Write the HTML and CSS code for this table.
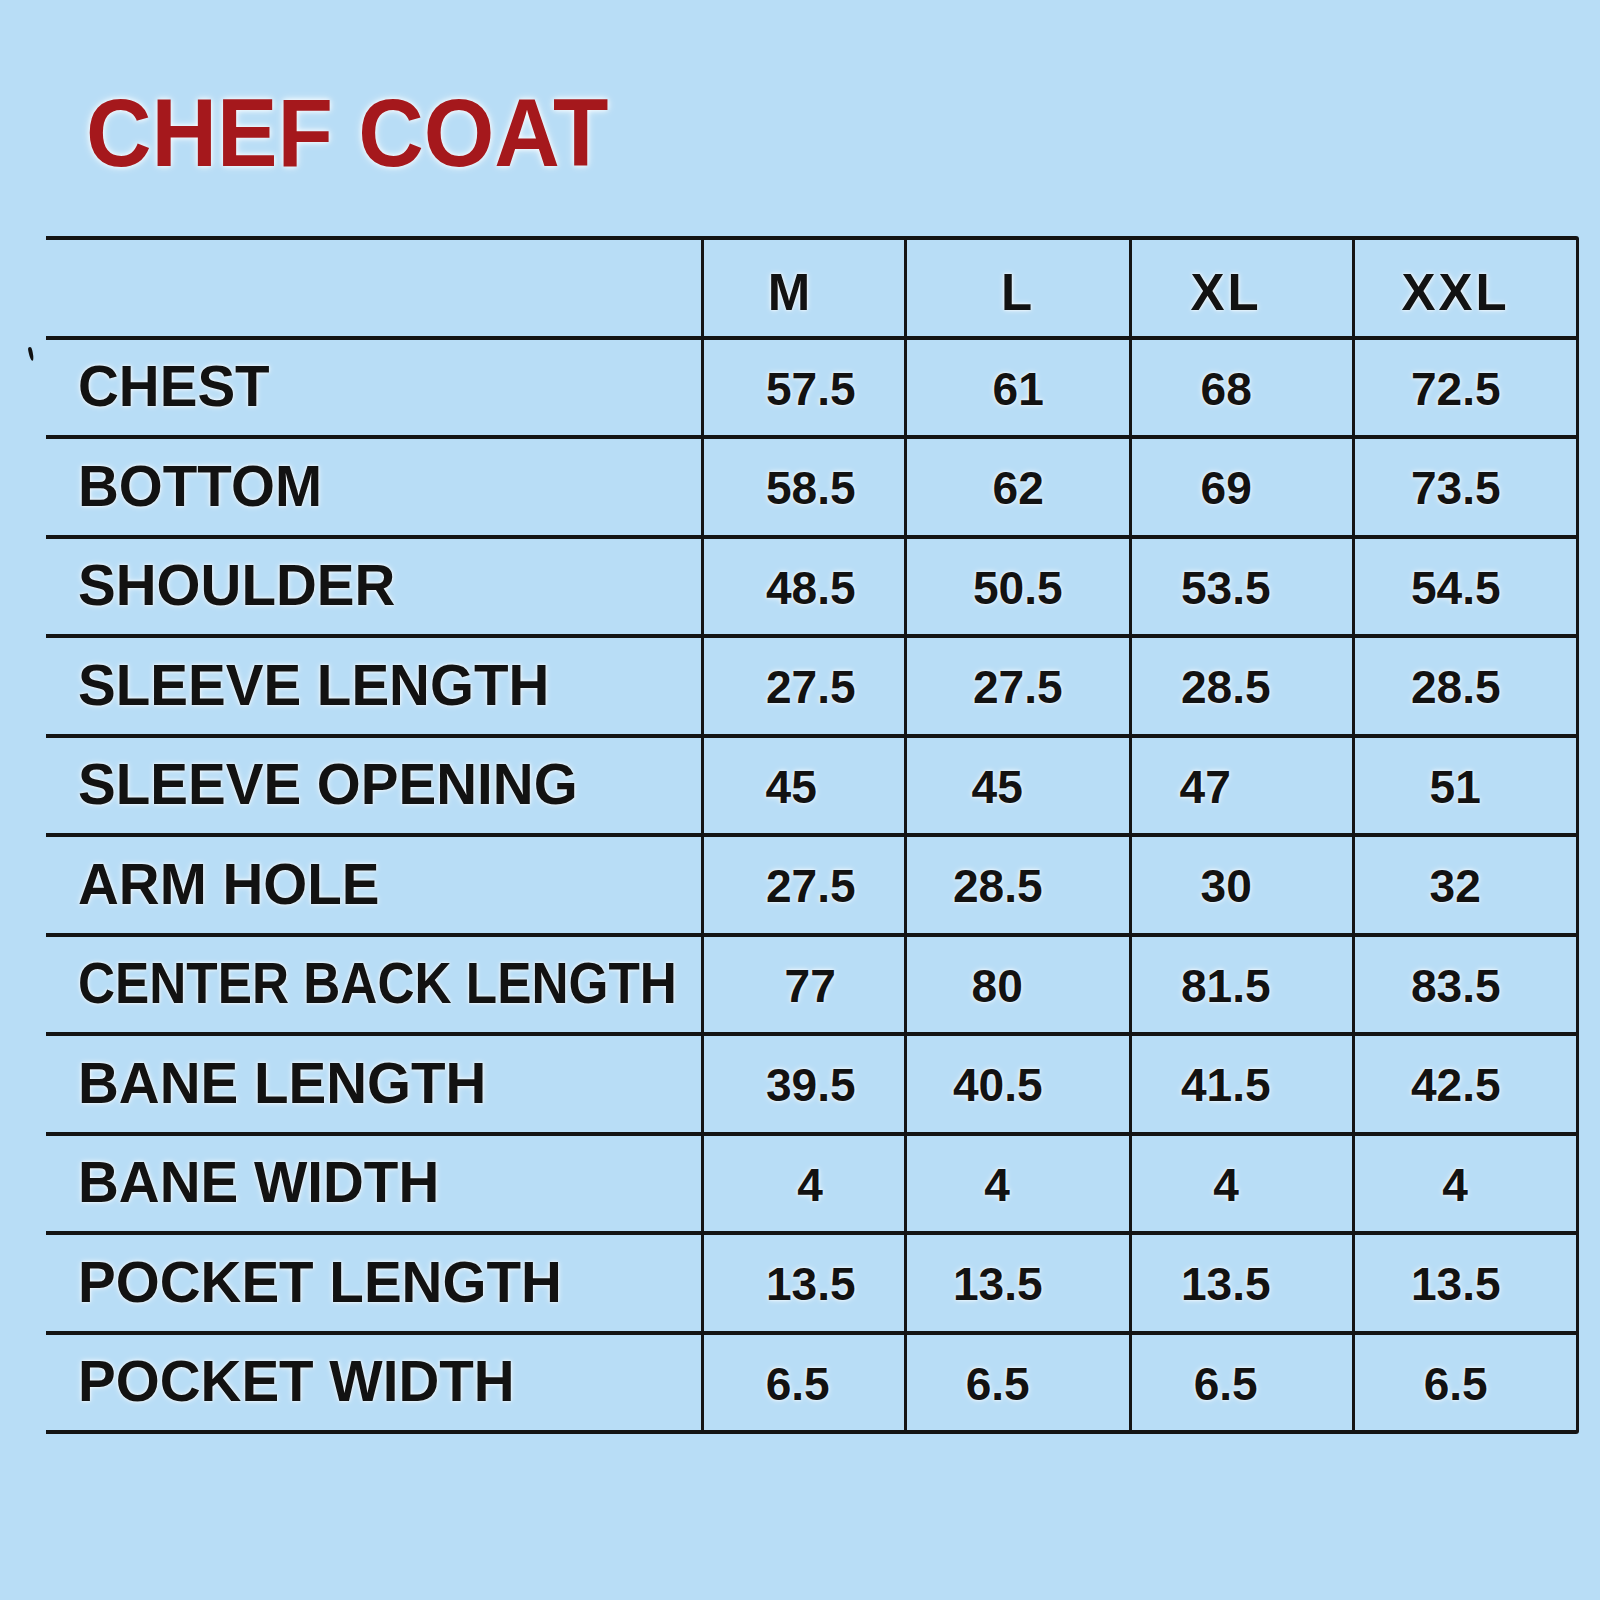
FILE: index.html
```html
<!DOCTYPE html>
<html lang="en">
<head>
<meta charset="utf-8">
<title>Chef Coat Size Chart</title>
<link rel="stylesheet" href="styles.css">
</head>
<body>
<div class="page">
  <span class="speck"></span>
  <h1 class="title"><span class="t">CHEF COAT</span></h1>
  <div class="chart">
    <div class="cell"></div>
    <div class="cell hd hm"><span>M</span></div>
    <div class="cell hd"><span>L</span></div>
    <div class="cell hd xl"><span>XL</span></div>
    <div class="cell hd xxl"><span>XXL</span></div>

    <div class="cell lab"><span>CHEST</span></div>
    <div class="cell num m"><span>57.5</span></div>
    <div class="cell num"><span>61</span></div>
    <div class="cell num xl"><span>68</span></div>
    <div class="cell num xxl"><span>72.5</span></div>

    <div class="cell lab"><span>BOTTOM</span></div>
    <div class="cell num m"><span>58.5</span></div>
    <div class="cell num"><span>62</span></div>
    <div class="cell num xl"><span>69</span></div>
    <div class="cell num xxl"><span>73.5</span></div>

    <div class="cell lab"><span>SHOULDER</span></div>
    <div class="cell num m"><span>48.5</span></div>
    <div class="cell num"><span>50.5</span></div>
    <div class="cell num xl"><span>53.5</span></div>
    <div class="cell num xxl"><span>54.5</span></div>

    <div class="cell lab"><span>SLEEVE LENGTH</span></div>
    <div class="cell num m"><span>27.5</span></div>
    <div class="cell num"><span>27.5</span></div>
    <div class="cell num xl"><span>28.5</span></div>
    <div class="cell num xxl"><span>28.5</span></div>

    <div class="cell lab"><span>SLEEVE OPENING</span></div>
    <div class="cell num m2"><span>45</span></div>
    <div class="cell num l2"><span>45</span></div>
    <div class="cell num xl2"><span>47</span></div>
    <div class="cell num xxl"><span>51</span></div>

    <div class="cell lab"><span>ARM HOLE</span></div>
    <div class="cell num m"><span>27.5</span></div>
    <div class="cell num l2"><span>28.5</span></div>
    <div class="cell num xl"><span>30</span></div>
    <div class="cell num xxl"><span>32</span></div>

    <div class="cell lab long"><span>CENTER BACK LENGTH</span></div>
    <div class="cell num m"><span>77</span></div>
    <div class="cell num l2"><span>80</span></div>
    <div class="cell num xl"><span>81.5</span></div>
    <div class="cell num xxl"><span>83.5</span></div>

    <div class="cell lab"><span>BANE LENGTH</span></div>
    <div class="cell num m"><span>39.5</span></div>
    <div class="cell num l2"><span>40.5</span></div>
    <div class="cell num xl"><span>41.5</span></div>
    <div class="cell num xxl"><span>42.5</span></div>

    <div class="cell lab"><span>BANE WIDTH</span></div>
    <div class="cell num m"><span>4</span></div>
    <div class="cell num l2"><span>4</span></div>
    <div class="cell num xl"><span>4</span></div>
    <div class="cell num xxl"><span>4</span></div>

    <div class="cell lab"><span>POCKET LENGTH</span></div>
    <div class="cell num m"><span>13.5</span></div>
    <div class="cell num l2"><span>13.5</span></div>
    <div class="cell num xl"><span>13.5</span></div>
    <div class="cell num xxl"><span>13.5</span></div>

    <div class="cell lab"><span>POCKET WIDTH</span></div>
    <div class="cell num m3"><span>6.5</span></div>
    <div class="cell num l2"><span>6.5</span></div>
    <div class="cell num xl"><span>6.5</span></div>
    <div class="cell num xxl"><span>6.5</span></div>
  </div>
</div>
</body>
</html>
```

FILE: styles.css
```css
* { box-sizing: border-box; }

html, body {
  margin: 0;
  padding: 0;
  background: #b8ddf6;
}

.page {
  position: relative;
  width: 1600px;
  min-height: 1600px;
  padding-top: 85px;
  font-family: "Liberation Sans", Arial, sans-serif;
  font-weight: bold;
  color: #121212;
}

.speck {
  position: absolute;
  left: 29px;
  top: 347px;
  width: 4px;
  height: 14px;
  background: #111;
  border-radius: 50% 50% 60% 60% / 30% 30% 70% 70%;
  transform: rotate(-12deg);
}

.title {
  margin: 0 0 55px 0;
  padding-left: 86px;
  height: 96px;
  font-size: 96px;
  line-height: 1;
  font-weight: bold;
  color: #a5181c;
  text-shadow: 0 0 5px #fff, 0 0 10px rgba(255, 255, 255, 0.7);
}

.title .t {
  display: inline-block;
  transform: scaleX(0.945);
  transform-origin: left center;
}

.chart {
  margin-left: 46px;
  width: 1533px;
  display: grid;
  grid-template-columns: 655px 200px 222px 220px 221px;
  grid-auto-rows: 95.5px;
  column-gap: 3px;
  row-gap: 4px;
  padding: 4px 3px 4px 0;
  background: #141414;
  border-radius: 0 3px 3px 0;
}

.cell {
  background: #b8ddf6;
  display: flex;
  align-items: center;
  justify-content: center;
  line-height: 1;
  text-shadow: 0 0 3px #fff, 0 0 6px rgba(255, 255, 255, 0.7);
}

.cell span {
  display: inline-block;
  white-space: nowrap;
}

.hd {
  font-size: 51px;
  padding-top: 10px;
  letter-spacing: 3px;
}

.lab {
  justify-content: flex-start;
  padding-left: 32px;
  padding-bottom: 2px;
  font-size: 58px;
}

.lab span {
  transform: scaleX(0.975);
  transform-origin: left center;
}

.lab.long span {
  transform: scaleX(0.885);
}

.num {
  font-size: 47px;
  padding-top: 2px;
}

.num span {
  transform: scaleX(0.98);
  transform-origin: center center;
}

/* column-specific horizontal offsets of the values */
.hm { padding-right: 27px; }
.m { padding-left: 13px; }
.m2 { padding-right: 25px; }
.m3 { padding-right: 13px; }
.l2 { padding-right: 41px; }
.xl { padding-right: 32px; }
.xl2 { padding-right: 73px; }
.xxl { padding-right: 20px; }
```
